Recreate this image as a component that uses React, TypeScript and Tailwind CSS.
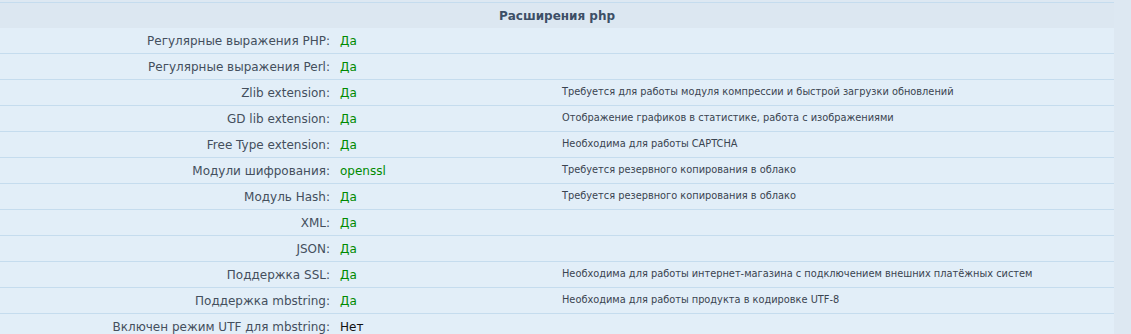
const rows = [
  { label: 'Регулярные выражения PHP:', value: 'Да', ok: true, note: '' },
  { label: 'Регулярные выражения Perl:', value: 'Да', ok: true, note: '' },
  { label: 'Zlib extension:', value: 'Да', ok: true, note: 'Требуется для работы модуля компрессии и быстрой загрузки обновлений' },
  { label: 'GD lib extension:', value: 'Да', ok: true, note: 'Отображение графиков в статистике, работа с изображениями' },
  { label: 'Free Type extension:', value: 'Да', ok: true, note: 'Необходима для работы CAPTCHA' },
  { label: 'Модули шифрования:', value: 'openssl', ok: true, note: 'Требуется резервного копирования в облако' },
  { label: 'Модуль Hash:', value: 'Да', ok: true, note: 'Требуется резервного копирования в облако' },
  { label: 'XML:', value: 'Да', ok: true, note: '' },
  { label: 'JSON:', value: 'Да', ok: true, note: '' },
  { label: 'Поддержка SSL:', value: 'Да', ok: true, note: 'Необходима для работы интернет-магазина с подключением внешних платёжных систем' },
  { label: 'Поддержка mbstring:', value: 'Да', ok: true, note: 'Необходима для работы продукта в кодировке UTF-8' },
  { label: 'Включен режим UTF для mbstring:', value: 'Нет', ok: false, note: '' },
]

export default function App() {
  return (
    <div className="w-[1131px] h-[334px] overflow-hidden bg-[#dde8f2] pt-[2px] font-['DejaVu_Sans',Verdana,sans-serif]">
      <div className="w-[1114px] border-t border-[#c5dcee]">
        <div className="h-[25px] bg-[#dce7f1] flex items-center justify-center text-[12px] font-bold text-[#3d4f66]">
          Расширения php
        </div>
        {rows.map((r) => (
          <div
            key={r.label}
            className="h-[26px] bg-[#e2eef8] border-b border-[#c5dcee] grid grid-cols-[336px_222px_1fr] items-center"
          >
            <span className="text-right pr-[6px] text-[12px] text-[#444f5d]">{r.label}</span>
            <span className={`pl-[4px] text-[12px] ${r.ok ? 'text-[#008a00]' : 'text-[#111111]'}`}>
              {r.value}
            </span>
            <span className="pl-[4px] text-[9.8px] text-[#3a4450]">{r.note}</span>
          </div>
        ))}
      </div>
    </div>
  )
}
